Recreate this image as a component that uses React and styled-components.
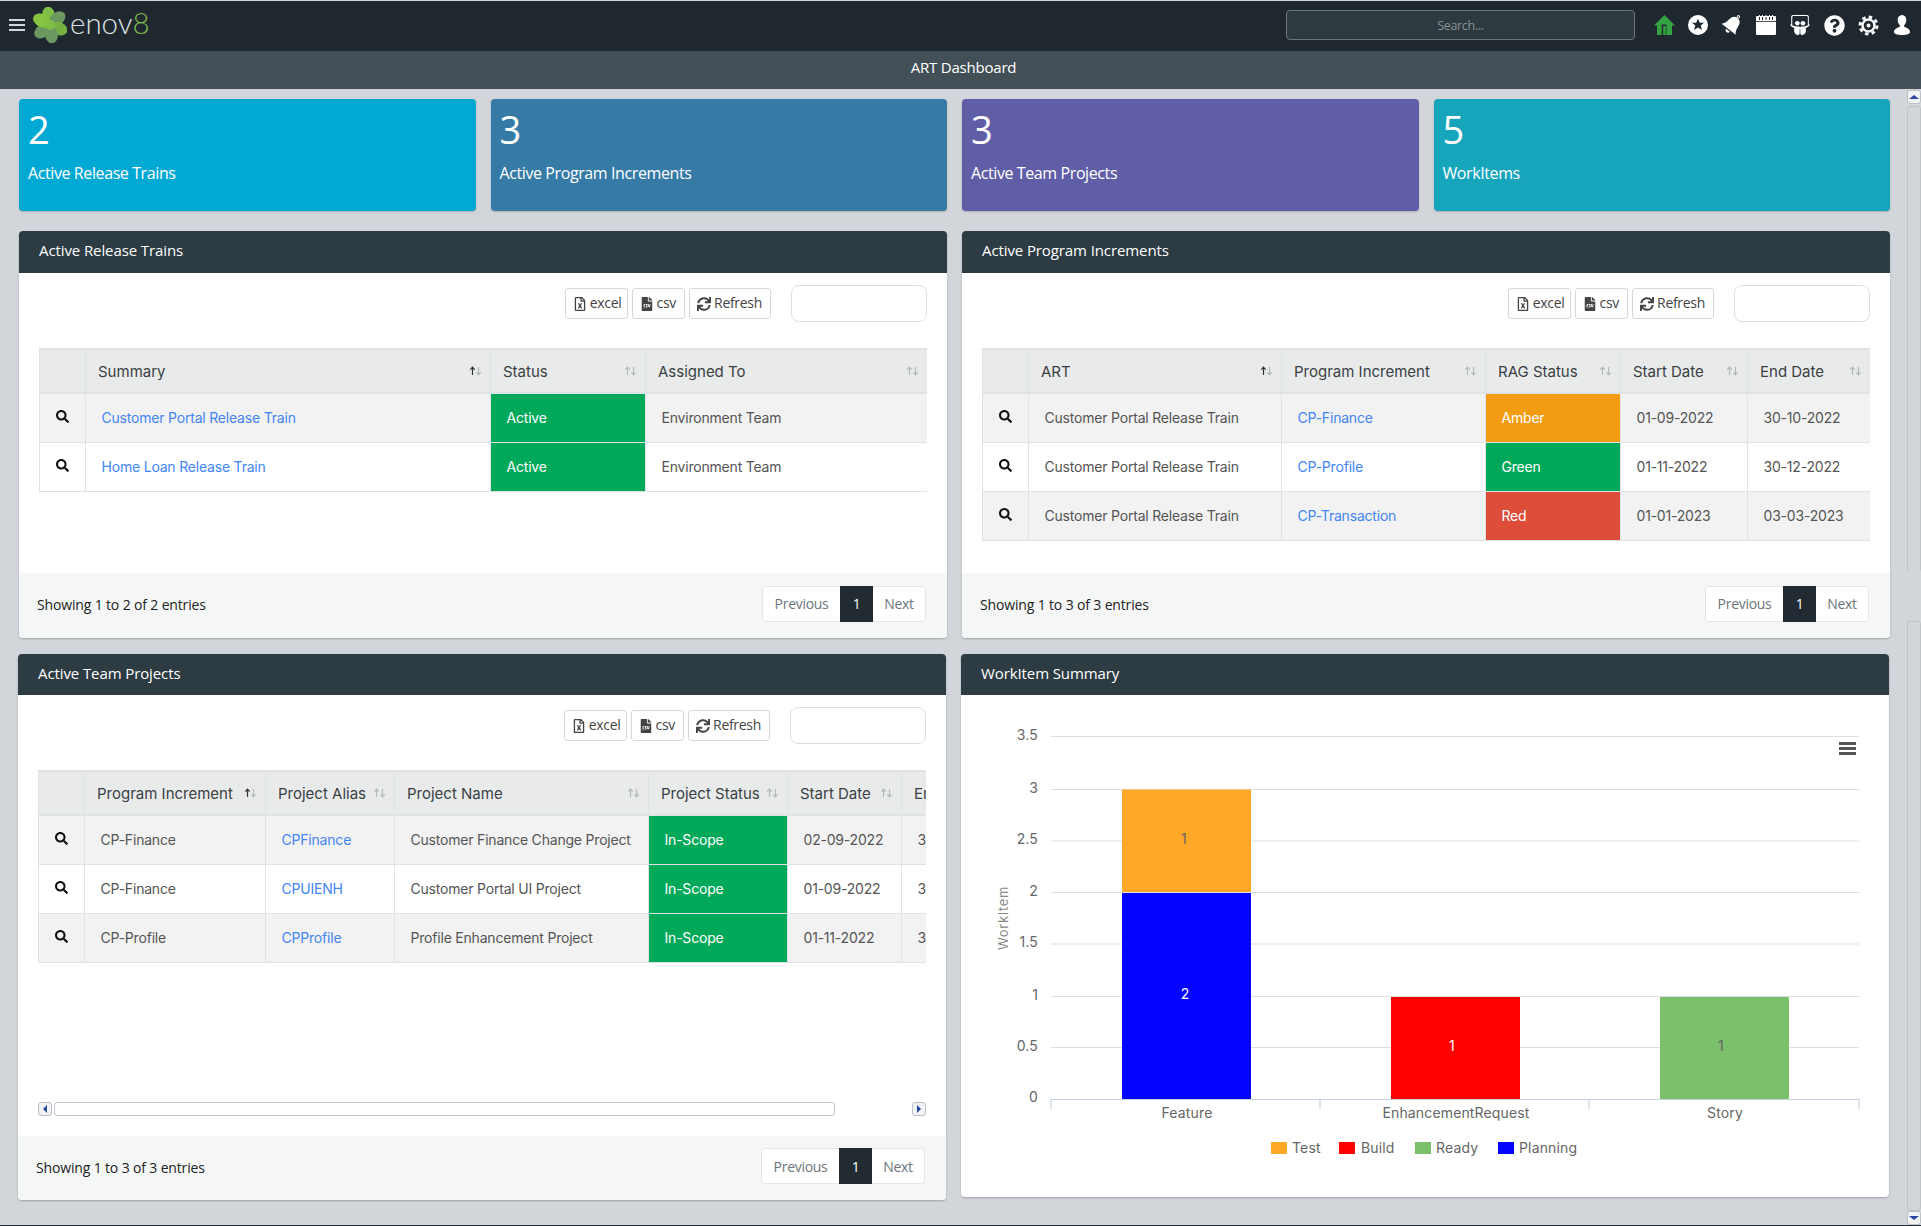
import styled, { createGlobalStyle } from "styled-components"
import { FaSearch, FaRegFileExcel, FaFileCsv, FaSync, FaSlideshare, FaQuestionCircle } from "react-icons/fa"

const GlobalStyle = createGlobalStyle`
html, body {
  margin: 0;
  padding: 0;
  height: 1226px;
  overflow: hidden;
  background: #d2d6db;
  font-family: "Open Sans", "Liberation Sans", sans-serif;
}
* { box-sizing: border-box; }
`

const TABLE_FONT = `"Inter", "Open Sans", sans-serif`

const Page = styled.div`
display: flex;
flex-direction: column;
width: 1921px;
height: 1226px;
padding-top: 1px;
background: #d2d6db;
border-bottom: 1px solid #2a3136;
`

const Navbar = styled.header`
display: flex;
align-items: center;
flex: none;
height: 50px;
padding: 0 9px 2px;
background: #1f282f;
`

const Burger = styled.div`
display: flex;
flex-direction: column;
justify-content: space-between;
width: 16px;
height: 12px;
span {
  display: block;
  height: 2px;
  background: #d5d8da;
}
`

const LogoMark = styled.svg`
width: 34px;
height: 36px;
margin-left: 8px;
flex: none;
`

const Wordmark = styled.div`
margin-left: 3px;
font-family: "Lato", sans-serif;
font-weight: 300;
font-size: 29.5px;
line-height: 1;
color: #dfe2e3;
position: relative;
top: -2px;
b {
  font-weight: 300;
  color: #7ab648;
}
`

const NavSearch = styled.input`
width: 349px;
height: 30px;
margin-left: auto;
background: #2d3a40;
border: 1px solid #6b757b;
border-radius: 4px;
color: #fff;
font-family: "Open Sans", sans-serif;
font-size: 12.5px;
letter-spacing: -0.3px;
text-align: center;
outline: none;
&::placeholder { color: #8a9196; opacity: 1; }
`

const NavIcons = styled.nav`
display: flex;
align-items: center;
margin-left: 12px;
margin-right: -7px;
`

const NavIcon = styled.div`
display: flex;
align-items: center;
justify-content: center;
width: 34px;
height: 30px;
color: ${({ $green }) => ($green ? "#35a242" : "#fff")};
svg { display: block; }
`

const TitleBar = styled.div`
flex: none;
height: 38px;
padding-left: 6px;
background: #434f56;
color: #fff;
font-size: 15px;
line-height: 33px;
letter-spacing: -0.2px;
text-align: center;
`

const Main = styled.div`
display: flex;
flex: 1;
min-height: 0;
`

const Content = styled.main`
flex: 1;
min-width: 0;
padding: 10px 17px 0 19px;
`

const StatRow = styled.section`
display: grid;
grid-template-columns: repeat(4, 1fr);
gap: 15px;
`

const StatCard = styled.div`
height: 112px;
padding: 7px 9px;
background: ${({ $color }) => $color};
border-radius: 4px;
box-shadow: 0 1px 2px rgba(0, 0, 0, 0.2);
color: #fff;
`

const StatValue = styled.div`
font-size: 38px;
line-height: 46px;
`

const StatLabel = styled.div`
margin-top: 10px;
font-size: 16px;
font-weight: 500;
line-height: 22px;
letter-spacing: -0.4px;
`

const PanelRow = styled.section`
display: grid;
grid-template-columns: repeat(2, 928px);
gap: 15px;
margin-top: ${({ $top }) => $top}px;
margin-left: ${({ $shift }) => ($shift ? "-1px" : "0")};
`

const Panel = styled.article`
display: flex;
flex-direction: column;
height: ${({ $height }) => $height}px;
background: #fff;
border-radius: 4px;
box-shadow: 0 1px 2px rgba(0, 0, 0, 0.25);
overflow: hidden;
`

const PanelHead = styled.h2`
flex: none;
height: ${({ $height }) => $height}px;
margin: 0;
padding: 0 20px;
background: #2d3b43;
color: #fff;
font-size: 15px;
font-weight: 400;
line-height: ${({ $height }) => $height - 3}px;
letter-spacing: -0.1px;
`

const PanelBody = styled.div`
display: flex;
flex-direction: column;
flex: 1;
min-height: 0;
padding: 12px 20px 20px;
`

const Toolbar = styled.div`
display: flex;
align-items: center;
justify-content: flex-end;
flex: none;
height: 37px;
margin-bottom: 26px;
`

const ToolButton = styled.button`
display: flex;
align-items: center;
gap: 3px;
height: 31px;
margin-left: 4px;
padding: 0 ${({ $right }) => $right || 8}px 2px 7px;
background: #fff;
border: 1px solid #d6d9db;
border-radius: 3px;
color: #444;
font-family: "Open Sans", sans-serif;
font-size: 14px;
letter-spacing: -0.3px;
svg { font-size: 14px; flex: none; margin-top: 2px; }
`

const FilterBox = styled.input`
width: 136px;
height: 37px;
margin-left: 20px;
border: 1px solid #dcdfe1;
border-radius: 8px;
background: #fff;
outline: none;
`

const TableClip = styled.div`
flex: none;
overflow: hidden;
`

const Table = styled.table`
width: ${({ $width }) => $width}px;
border-collapse: collapse;
table-layout: fixed;
font-family: ${TABLE_FONT};
`

const HeadCell = styled.th`
height: 44px;
padding: 0 8px 0 12px;
background: #e9ebeb;
border: 1px solid #e0e3e5;
border-top-width: 2px;
border-bottom-width: 2px;
color: #3a3f44;
font-size: 15px;
font-weight: 400;
letter-spacing: 0;
text-align: left;
white-space: nowrap;
overflow: hidden;
`

const HeadInner = styled.div`
display: flex;
align-items: center;
justify-content: space-between;
gap: 6px;
`

const Cell = styled.td`
height: 49px;
padding: 0 0 0 15.5px;
background: ${({ $bg, $odd }) => $bg || ($odd ? "#f2f2f2" : "#fff")};
border: 1px solid #e0e3e5;
color: ${({ $bg }) => ($bg ? "#fff" : "#555")};
font-size: 14px;
font-weight: 400;
letter-spacing: -0.2px;
white-space: nowrap;
overflow: hidden;
`

const IconCell = styled(Cell)`
padding: 0;
color: #111;
text-align: center;
vertical-align: top;
svg {
  display: block;
  margin: 16px auto 0;
  font-size: 13px;
}
`

const TableLink = styled.a`
color: #4285f4;
text-decoration: none;
`

const Footer = styled.footer`
display: flex;
align-items: center;
justify-content: space-between;
flex: none;
height: ${({ $height }) => $height}px;
padding: 0 21px 2px 18px;
background: #f5f7f7;
color: #222;
font-size: 14px;
letter-spacing: -0.15px;
`

const Pager = styled.div`
display: flex;
height: 36px;
margin-top: -2px;
background: #fff;
border: 1px solid #e3e6e8;
border-radius: 4px;
letter-spacing: -0.3px;
`

const PageItem = styled.span`
display: flex;
align-items: center;
justify-content: center;
width: ${({ $width }) => $width}px;
margin: -1px 0;
background: ${({ $active }) => ($active ? "#212b31" : "transparent")};
color: ${({ $active }) => ($active ? "#fff" : "#6c757d")};
`

const HScroll = styled.div`
display: flex;
align-items: center;
flex: none;
height: 14px;
margin-top: auto;
`

const ScrollArrow = styled.span`
display: flex;
align-items: center;
justify-content: center;
flex: none;
width: 14px;
height: 14px;
background: #f2f3f5;
border: 1px solid #bcc0c5;
border-radius: 3px;
&::after {
  content: "";
  border: 4px solid transparent;
  ${({ $dir }) => $dir === "left" && "border-right-color: #2a47a8; border-left-width: 0;"}
  ${({ $dir }) => $dir === "right" && "border-left-color: #2a47a8; border-right-width: 0;"}
  ${({ $dir }) => $dir === "up" && "border-bottom-color: #2a47a8; border-top-width: 0; border-left-width: 5px; border-right-width: 5px;"}
  ${({ $dir }) => $dir === "down" && "border-top-color: #2a47a8; border-bottom-width: 0; border-left-width: 5px; border-right-width: 5px;"}
}
`

const HThumb = styled.span`
width: 781px;
height: 14px;
margin-left: 2px;
margin-right: auto;
background: #fff;
border: 1px solid #c3c6ca;
border-radius: 3px;
`

const VScroll = styled.aside`
display: flex;
flex-direction: column;
flex: none;
width: 14px;
padding-top: 1px;
`

const VTrack = styled.div`
flex: none;
height: ${({ $height }) => $height}px;
margin-top: ${({ $top }) => $top}px;
border: 1px solid #bfc3c8;
border-width: ${({ $open }) => ($open ? "1px 1px 0" : "1px")};
border-radius: 3px;
`

const ChartBody = styled.div`
flex: 1;
min-height: 0;
`

const ChartSvg = styled.svg`
display: block;
width: 928px;
height: 502px;
font-family: ${TABLE_FONT};
font-size: 14px;
letter-spacing: 0.15px;
fill: #666;
`

function SortIcon({ active }) {
  return (
    <svg width="13" height="10" viewBox="0 0 13 10" style={{ flex: "none" }}>
      <path d="M3.5 9V1.5M1.3 3.7 3.5 1.2l2.2 2.5" fill="none" stroke={active ? "#333" : "#b4b8bb"} strokeWidth="1.2" />
      <path d="M9.5 1v7.5M7.3 6.3l2.2 2.5 2.2-2.5" fill="none" stroke="#b4b8bb" strokeWidth="1.2" />
    </svg>
  )
}

function HomeIcon() {
  return (
    <svg width="21" height="21" viewBox="0 0 21 21" fill="currentColor">
      <path fillRule="evenodd" d="M10.5 0 21 10.5h-3V20h-5.500V9.500h-4.800V20H3V10.500H0zM9.200 11h2.600v9H9.200z" />
    </svg>
  )
}

function StarIcon() {
  return (
    <svg width="20" height="20" viewBox="0 0 20 20" fill="currentColor">
      <path fillRule="evenodd" d="M10 0a10 10 0 1 1 0 20 10 10 0 0 1 0-20zm0 3.800 1.800 4h4.300l-3.400 2.800 1.200 4.300-3.900-2.400-3.900 2.400 1.200-4.300-3.400-2.800h4.300z" />
    </svg>
  )
}

function BellIcon() {
  return (
    <svg width="24" height="24" viewBox="0 0 20 20" fill="currentColor">
      <g transform="rotate(38 10 10)">
        <path d="M10 2.500c3.200 0 4.600 2.500 4.800 5.500.2 3 1 4.800 2.700 6.500H2.500c1.700-1.700 2.500-3.500 2.700-6.500.2-3 1.600-5.500 4.800-5.500z" />
        <path d="M8 15.500h4a2 2 0 0 1-4 0z" />
        <circle cx="10" cy="1.300" r="1" fill="none" stroke="currentColor" strokeWidth="0.8" />
      </g>
    </svg>
  )
}

function CalendarIcon() {
  return (
    <svg width="20" height="20" viewBox="0 0 20 20" fill="currentColor">
      <path fillRule="evenodd" d="M1 1h18a1 1 0 0 1 1 1v17a1 1 0 0 1-1 1H1a1 1 0 0 1-1-1V2a1 1 0 0 1 1-1zM3 2v3h1V2zM6 2v3h1V2zM9.500 2v3h1V2zM13 2v3h1V2zM16 2v3h1V2z" />
      <path d="M3 0h1v2H3zM6 0h1v2H6zM9.500 0h1v2h-1zM13 0h1v2h-1zM16 0h1v2h-1z" />
      <rect x="0" y="6" width="20" height="0.8" fill="#1f282f" />
    </svg>
  )
}

function GearIcon() {
  return (
    <svg width="21" height="21" viewBox="0 0 21 21" fill="none" stroke="currentColor">
      <circle cx="10.500" cy="10.500" r="8.500" strokeWidth="3" strokeDasharray="3.400 3.270" />
      <circle cx="10.500" cy="10.500" r="6" strokeWidth="2.400" />
      <circle cx="10.500" cy="10.500" r="2" fill="currentColor" stroke="none" />
    </svg>
  )
}

function UserIcon() {
  return (
    <svg width="18" height="20" viewBox="0 0 18 20" fill="currentColor">
      <path d="M9 0c2.800 0 4.300 2.200 4.300 5 0 2.200-.9 4-1.900 5-.7.800-.4 1.700.7 2.200 2.300 1 4.900 1.800 4.900 4.800 0 2-3 3-8 3s-8-1-8-3c0-3 2.600-3.800 4.900-4.800 1.100-.5 1.400-1.400.7-2.200-1-1-1.900-2.800-1.900-5C4.700 2.200 6.200 0 9 0z" />
    </svg>
  )
}

function Logo() {
  const petals = [
    { angle: -8, fill: "#7fbf45" },
    { angle: 50, fill: "url(#dots)" },
    { angle: 112, fill: "#76b043" },
    { angle: 172, fill: "url(#dots)" },
    { angle: 232, fill: "url(#dots)" },
    { angle: 298, fill: "#86c441" },
  ]
  return (
    <LogoMark viewBox="0 0 34 36">
      <defs>
        <pattern id="dots" width="2" height="2" patternUnits="userSpaceOnUse">
          <rect width="2" height="2" fill="#5f8f55" />
          <circle cx="1" cy="1" r="0.6" fill="#98b888" />
        </pattern>
      </defs>
      {petals.map((p) => (
        <ellipse key={p.angle} cx="17" cy="8.500" rx="6.500" ry="9" fill={p.fill} transform={`rotate(${p.angle} 17 18)`} />
      ))}
      <circle cx="17" cy="18" r="5" fill="#7fbf45" />
    </LogoMark>
  )
}

const releaseTrains = [
  ["Customer Portal Release Train", "Active", "Environment Team"],
  ["Home Loan Release Train", "Active", "Environment Team"],
]

const increments = [
  ["CP-Finance", "Amber", "#f39c12", "01-09-2022", "30-10-2022"],
  ["CP-Profile", "Green", "#00a85a", "01-11-2022", "30-12-2022"],
  ["CP-Transaction", "Red", "#de4c3a", "01-01-2023", "03-03-2023"],
]

const projects = [
  ["CP-Finance", "CPFinance", "Customer Finance Change Project", "02-09-2022"],
  ["CP-Finance", "CPUIENH", "Customer Portal UI Project", "01-09-2022"],
  ["CP-Profile", "CPProfile", "Profile Enhancement Project", "01-11-2022"],
]

const GREEN = "#00a85a"

function Tools() {
  return (
    <Toolbar>
      <ToolButton $right={5}><FaRegFileExcel />excel</ToolButton>
      <ToolButton><FaFileCsv />csv</ToolButton>
      <ToolButton><FaSync />Refresh</ToolButton>
      <FilterBox />
    </Toolbar>
  )
}

function TableHead({ widths, titles }) {
  return (
    <>
      <colgroup>
        {widths.map((w, i) => <col key={i} style={{ width: w }} />)}
      </colgroup>
      <thead>
        <tr>
          <HeadCell />
          {titles.map((t, i) => (
            <HeadCell key={t}>
              <HeadInner>{t}<SortIcon active={i === 0} /></HeadInner>
            </HeadCell>
          ))}
        </tr>
      </thead>
    </>
  )
}

function PanelFooter({ text, height }) {
  return (
    <Footer $height={height}>
      <span>{text}</span>
      <Pager>
        <PageItem $width={77}>Previous</PageItem>
        <PageItem $width={33} $active>1</PageItem>
        <PageItem $width={52}>Next</PageItem>
      </Pager>
    </Footer>
  )
}

const gridY = [736.5, 789.5, 841, 892.5, 944, 996.5, 1047.5]
const ticks = ["3.5", "3", "2.5", "2", "1.5", "1", "0.5"]
const OX = 961
const OY = 695

function WorkItemChart() {
  return (
    <ChartSvg viewBox="0 0 928 502">
      <g transform={`translate(${-OX} ${-OY})`}>
        {gridY.map((y, i) => (
          <g key={y}>
            <line x1="1051" x2="1859" y1={y} y2={y} stroke="#dcdfe2" strokeWidth="1.200" />
            <text x="1038" y={y + 3} textAnchor="end">{ticks[i]}</text>
          </g>
        ))}
        <text x="1038" y="1102" textAnchor="end">0</text>
        <text transform="translate(1008 918) rotate(-90)" textAnchor="middle" fontSize="13" letterSpacing="0.6" fill="#888">WorkItem</text>

        <rect x="1122" y="789.500" width="129" height="102.500" fill="#ffa726" />
        <rect x="1122" y="893" width="129" height="206" fill="#0404ff" />
        <rect x="1391" y="997" width="129" height="102" fill="#ff0000" />
        <rect x="1660" y="997" width="129" height="102" fill="#7cc06c" />

        <text x="1184" y="844" textAnchor="middle">1</text>
        <text x="1185" y="999" textAnchor="middle" fill="#fff">2</text>
        <text x="1452" y="1051" textAnchor="middle" fill="#fff">1</text>
        <text x="1721" y="1051" textAnchor="middle">1</text>

        <path d="M1051 1109v-9.500h808v9.500M1320 1099.500v9.500M1589 1099.500v9.500" fill="none" stroke="#c3d0e0" strokeWidth="1.100" />
        <text x="1187" y="1118" textAnchor="middle">Feature</text>
        <text x="1456" y="1118" textAnchor="middle">EnhancementRequest</text>
        <text x="1725" y="1118" textAnchor="middle">Story</text>

        <rect x="1271" y="1142" width="16" height="12" fill="#ffa726" />
        <text x="1292" y="1153">Test</text>
        <rect x="1339" y="1142" width="16" height="12" fill="#ff0000" />
        <text x="1361" y="1153">Build</text>
        <rect x="1415" y="1142" width="16" height="12" fill="#7cc06c" />
        <text x="1436" y="1153">Ready</text>
        <rect x="1498" y="1142" width="16" height="12" fill="#0404ff" />
        <text x="1519" y="1153">Planning</text>

        <path d="M1839 742h17v3h-17zM1839 747h17v3h-17zM1839 752h17v3h-17z" fill="#555" />
      </g>
    </ChartSvg>
  )
}

export default function App() {
  return (
    <Page>
      <GlobalStyle />
      <Navbar>
        <Burger><span /><span /><span /></Burger>
        <Logo />
        <Wordmark>enov<b>8</b></Wordmark>
        <NavSearch placeholder="Search..." />
        <NavIcons>
          <NavIcon $green><HomeIcon /></NavIcon>
          <NavIcon><StarIcon /></NavIcon>
          <NavIcon><BellIcon /></NavIcon>
          <NavIcon><CalendarIcon /></NavIcon>
          <NavIcon><FaSlideshare size={20} /></NavIcon>
          <NavIcon><FaQuestionCircle size={21} /></NavIcon>
          <NavIcon><GearIcon /></NavIcon>
          <NavIcon><UserIcon /></NavIcon>
        </NavIcons>
      </Navbar>
      <TitleBar>ART Dashboard</TitleBar>
      <Main>
        <Content>
          <StatRow>
            <StatCard $color="#00a9d4"><StatValue>2</StatValue><StatLabel>Active Release Trains</StatLabel></StatCard>
            <StatCard $color="#367aa6"><StatValue>3</StatValue><StatLabel>Active Program Increments</StatLabel></StatCard>
            <StatCard $color="#615ea8"><StatValue>3</StatValue><StatLabel>Active Team Projects</StatLabel></StatCard>
            <StatCard $color="#17a5bb"><StatValue>5</StatValue><StatLabel>WorkItems</StatLabel></StatCard>
          </StatRow>

          <PanelRow $top={20}>
            <Panel $height={407}>
              <PanelHead $height={42}>Active Release Trains</PanelHead>
              <PanelBody>
                <Tools />
                <TableClip>
                  <Table $width={888}>
                    <TableHead widths={[46, 405, 155, 282]} titles={["Summary", "Status", "Assigned To"]} />
                    <tbody>
                      {releaseTrains.map((row, i) => (
                        <tr key={row[0]}>
                          <IconCell $odd={i % 2 === 0}><FaSearch /></IconCell>
                          <Cell $odd={i % 2 === 0}><TableLink href="#">{row[0]}</TableLink></Cell>
                          <Cell $bg={GREEN}>{row[1]}</Cell>
                          <Cell $odd={i % 2 === 0}>{row[2]}</Cell>
                        </tr>
                      ))}
                    </tbody>
                  </Table>
                </TableClip>
              </PanelBody>
              <PanelFooter text="Showing 1 to 2 of 2 entries" height={65} />
            </Panel>

            <Panel $height={407}>
              <PanelHead $height={42}>Active Program Increments</PanelHead>
              <PanelBody>
                <Tools />
                <TableClip>
                  <Table $width={888}>
                    <TableHead widths={[46, 253, 204, 135, 127, 123]} titles={["ART", "Program Increment", "RAG Status", "Start Date", "End Date"]} />
                    <tbody>
                      {increments.map((row, i) => (
                        <tr key={row[0]}>
                          <IconCell $odd={i % 2 === 0}><FaSearch /></IconCell>
                          <Cell $odd={i % 2 === 0}>Customer Portal Release Train</Cell>
                          <Cell $odd={i % 2 === 0}><TableLink href="#">{row[0]}</TableLink></Cell>
                          <Cell $bg={row[2]}>{row[1]}</Cell>
                          <Cell $odd={i % 2 === 0}>{row[3]}</Cell>
                          <Cell $odd={i % 2 === 0}>{row[4]}</Cell>
                        </tr>
                      ))}
                    </tbody>
                  </Table>
                </TableClip>
              </PanelBody>
              <PanelFooter text="Showing 1 to 3 of 3 entries" height={65} />
            </Panel>
          </PanelRow>

          <PanelRow $top={16} $shift>
            <Panel $height={546}>
              <PanelHead $height={41}>Active Team Projects</PanelHead>
              <PanelBody>
                <Tools />
                <TableClip>
                  <Table $width={1010}>
                    <TableHead widths={[46, 181, 129, 254, 139, 114, 147]} titles={["Program Increment", "Project Alias", "Project Name", "Project Status", "Start Date", "End Date"]} />
                    <tbody>
                      {projects.map((row, i) => (
                        <tr key={row[1]}>
                          <IconCell $odd={i % 2 === 0}><FaSearch /></IconCell>
                          <Cell $odd={i % 2 === 0}>{row[0]}</Cell>
                          <Cell $odd={i % 2 === 0}><TableLink href="#">{row[1]}</TableLink></Cell>
                          <Cell $odd={i % 2 === 0}>{row[2]}</Cell>
                          <Cell $bg={GREEN}>In-Scope</Cell>
                          <Cell $odd={i % 2 === 0}>{row[3]}</Cell>
                          <Cell $odd={i % 2 === 0}>30-10-2022</Cell>
                        </tr>
                      ))}
                    </tbody>
                  </Table>
                </TableClip>
                <HScroll>
                  <ScrollArrow $dir="left" />
                  <HThumb />
                  <ScrollArrow $dir="right" />
                </HScroll>
              </PanelBody>
              <PanelFooter text="Showing 1 to 3 of 3 entries" height={64} />
            </Panel>

            <Panel $height={543}>
              <PanelHead $height={41}>WorkItem Summary</PanelHead>
              <ChartBody>
                <WorkItemChart />
              </ChartBody>
            </Panel>
          </PanelRow>
        </Content>
        <VScroll>
          <ScrollArrow $dir="up" />
          <VTrack $height={466} $top={2} $open />
          <VTrack $height={590} $top={49} />
          <ScrollArrow $dir="down" />
        </VScroll>
      </Main>
    </Page>
  )
}
